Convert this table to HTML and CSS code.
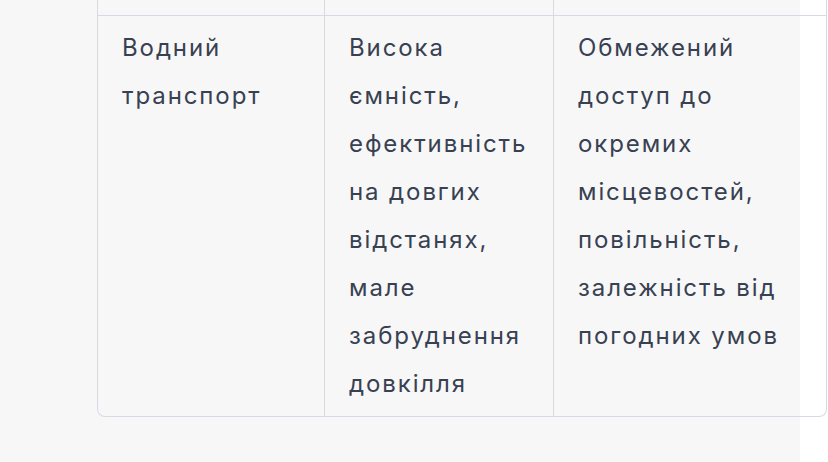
FILE: index.html
```html
<!DOCTYPE html>
<html lang="uk">
<head>
<meta charset="utf-8">
<link rel="stylesheet" href="styles.css">
</head>
<body>
<div class="page">
  <div class="table-wrap">
    <table class="data">
      <colgroup>
        <col class="c1">
        <col class="c2">
        <col class="c3">
      </colgroup>
      <tbody>
        <tr class="prev-row">
          <td></td><td></td><td></td>
        </tr>
        <tr>
          <td>Водний транспорт</td>
          <td>Висока ємність, ефективність на довгих відстанях, мале забруднення довкілля</td>
          <td>Обмежений доступ до окремих місцевостей, повільність, залежність від погодних умов</td>
        </tr>
      </tbody>
    </table>
  </div>
</div>
</body>
</html>
```
FILE: styles.css
```css
html, body {
  margin: 0;
  padding: 0;
  background: #ffffff;
}
.page {
  width: 800px;
  height: 462px;
  background: #f7f7f8;
  overflow: visible;
}
.table-wrap {
  padding-left: 97px;
}
.data {
  table-layout: fixed;
  width: 730px;
  border-collapse: separate;
  border-spacing: 0;
  border: 1px solid #d9d9e3;
  border-top: none;
  border-radius: 0 0 8px 8px;
  font-family: Inter, "Noto Sans", sans-serif;
  font-size: 24px;
  line-height: 48px;
  letter-spacing: 1.9px;
  color: #374151;
}
.c1 { width: 227px; }
.c2 { width: 229px; }
.c3 { width: 272px; }
.data td {
  padding: 8px 24px;
  vertical-align: top;
  text-align: left;
  border-right: 1px solid #d9d9e3;
}
.data td:last-child {
  border-right: none;
}
.prev-row td {
  height: 16px;
  padding: 0;
  border-bottom: 1px solid #d9d9e3;
  box-sizing: border-box;
}
```
